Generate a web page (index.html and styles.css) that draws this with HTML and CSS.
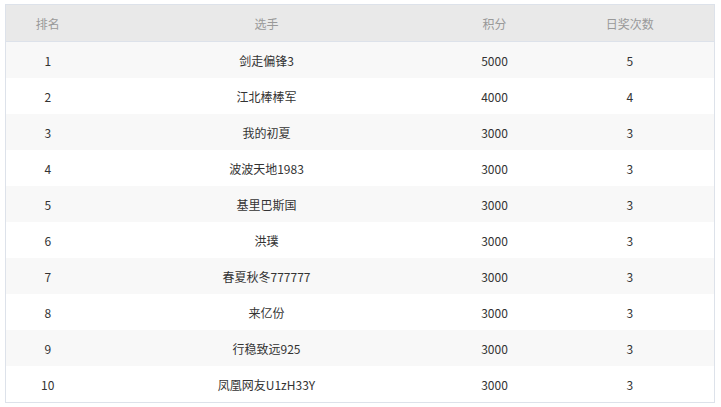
FILE: index.html
```html
<!DOCTYPE html>
<html lang="zh">
<head>
<meta charset="utf-8">
<link rel="stylesheet" href="styles.css">
</head>
<body>
<div class="wrap">
<table class="rank">
  <colgroup>
    <col class="c1"><col class="c2"><col class="c3"><col class="c4">
  </colgroup>
  <thead>
    <tr><th>排名</th><th>选手</th><th>积分</th><th>日奖次数</th></tr>
  </thead>
  <tbody>
    <tr><td>1</td><td>剑走偏锋3</td><td>5000</td><td>5</td></tr>
    <tr><td>2</td><td>江北棒棒军</td><td>4000</td><td>4</td></tr>
    <tr><td>3</td><td>我的初夏</td><td>3000</td><td>3</td></tr>
    <tr><td>4</td><td>波波天地1983</td><td>3000</td><td>3</td></tr>
    <tr><td>5</td><td>基里巴斯国</td><td>3000</td><td>3</td></tr>
    <tr><td>6</td><td>洪璞</td><td>3000</td><td>3</td></tr>
    <tr><td>7</td><td>春夏秋冬777777</td><td>3000</td><td>3</td></tr>
    <tr><td>8</td><td>来亿份</td><td>3000</td><td>3</td></tr>
    <tr><td>9</td><td>行稳致远925</td><td>3000</td><td>3</td></tr>
    <tr><td>10</td><td>凤凰网友U1zH33Y</td><td>3000</td><td>3</td></tr>
  </tbody>
</table>
</div>
</body>
</html>
```
FILE: styles.css
```css
html, body {
  margin: 0;
  padding: 0;
  background: #fff;
}
body {
  font-family: "Noto Sans CJK SC", "Noto Sans", sans-serif;
  font-size: 12px;
  color: #333;
}
.wrap {
  padding: 4px 0 0 5px;
}
.rank {
  width: 710px;
  border-collapse: collapse;
  border: 1px solid #dde2ea;
  table-layout: fixed;
}
.c1 { width: 84px; }
.c2 { width: 354px; }
.c3 { width: 102px; }
.c4 { width: auto; }
.rank th {
  height: 36px;
  padding: 0;
  background: #e9e9e9;
  color: #999;
  font-weight: normal;
  text-align: center;
  border-bottom: 1px solid #dde2ea;
}
.rank td {
  height: 36px;
  padding: 0;
  text-align: center;
}
.rank tbody tr:nth-child(odd) td {
  background: #f8f8f8;
}
.rank tbody tr:nth-child(even) td {
  background: #fff;
}
```
